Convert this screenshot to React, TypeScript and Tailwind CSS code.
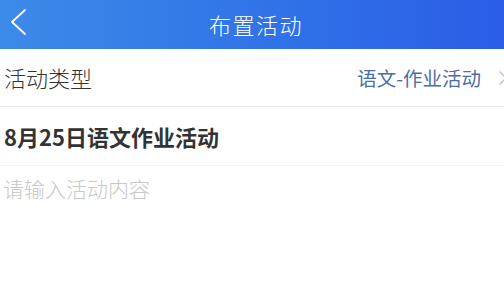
const font = { fontFamily: '"Noto Sans CJK SC", "Noto Sans", sans-serif' };

export default function App() {
  return (
    <div className="w-[504px] h-[305px] overflow-hidden bg-white" style={font}>
      <header className="relative h-[49px] flex items-center justify-center bg-gradient-to-r from-[#3c8ae8] to-[#2b5de6]">
        <svg className="absolute left-[8px] top-[8px]" width="20" height="28" viewBox="0 0 20 28" fill="none">
          <path d="M17 2 L4 14 L17 26" stroke="white" strokeWidth="1.8" strokeLinecap="round" strokeLinejoin="round" />
        </svg>
        <h1 className="text-[22px] text-white tracking-[1.5px] pl-[8px] font-light">布置活动</h1>
      </header>
      <div className="h-[58px] flex items-center justify-between pl-[4px] border-b border-[#f0f0f0]">
        <span className="text-[22px] text-[#333] font-light">活动类型</span>
        <div className="flex items-center gap-[17px] mr-[-4px]">
          <span className="text-[19.5px] text-[#4a6ea6]">语文-作业活动</span>
          <svg width="10" height="16" viewBox="0 0 10 16" fill="none">
            <path d="M2 2 L8 8 L2 14" stroke="#c4c4c4" strokeWidth="1.5" strokeLinecap="round" strokeLinejoin="round" />
          </svg>
        </div>
      </div>
      <div className="h-[59px] flex items-center pl-[4px] border-b border-[#f3f3f3]">
        <span className="text-[22px] font-bold text-[#333]">8月25日语文作业活动</span>
      </div>
      <div className="pt-[7px] pl-[3px]">
        <span className="text-[21px] text-[#c8c8c8] font-light">请输入活动内容</span>
      </div>
    </div>
  );
}
